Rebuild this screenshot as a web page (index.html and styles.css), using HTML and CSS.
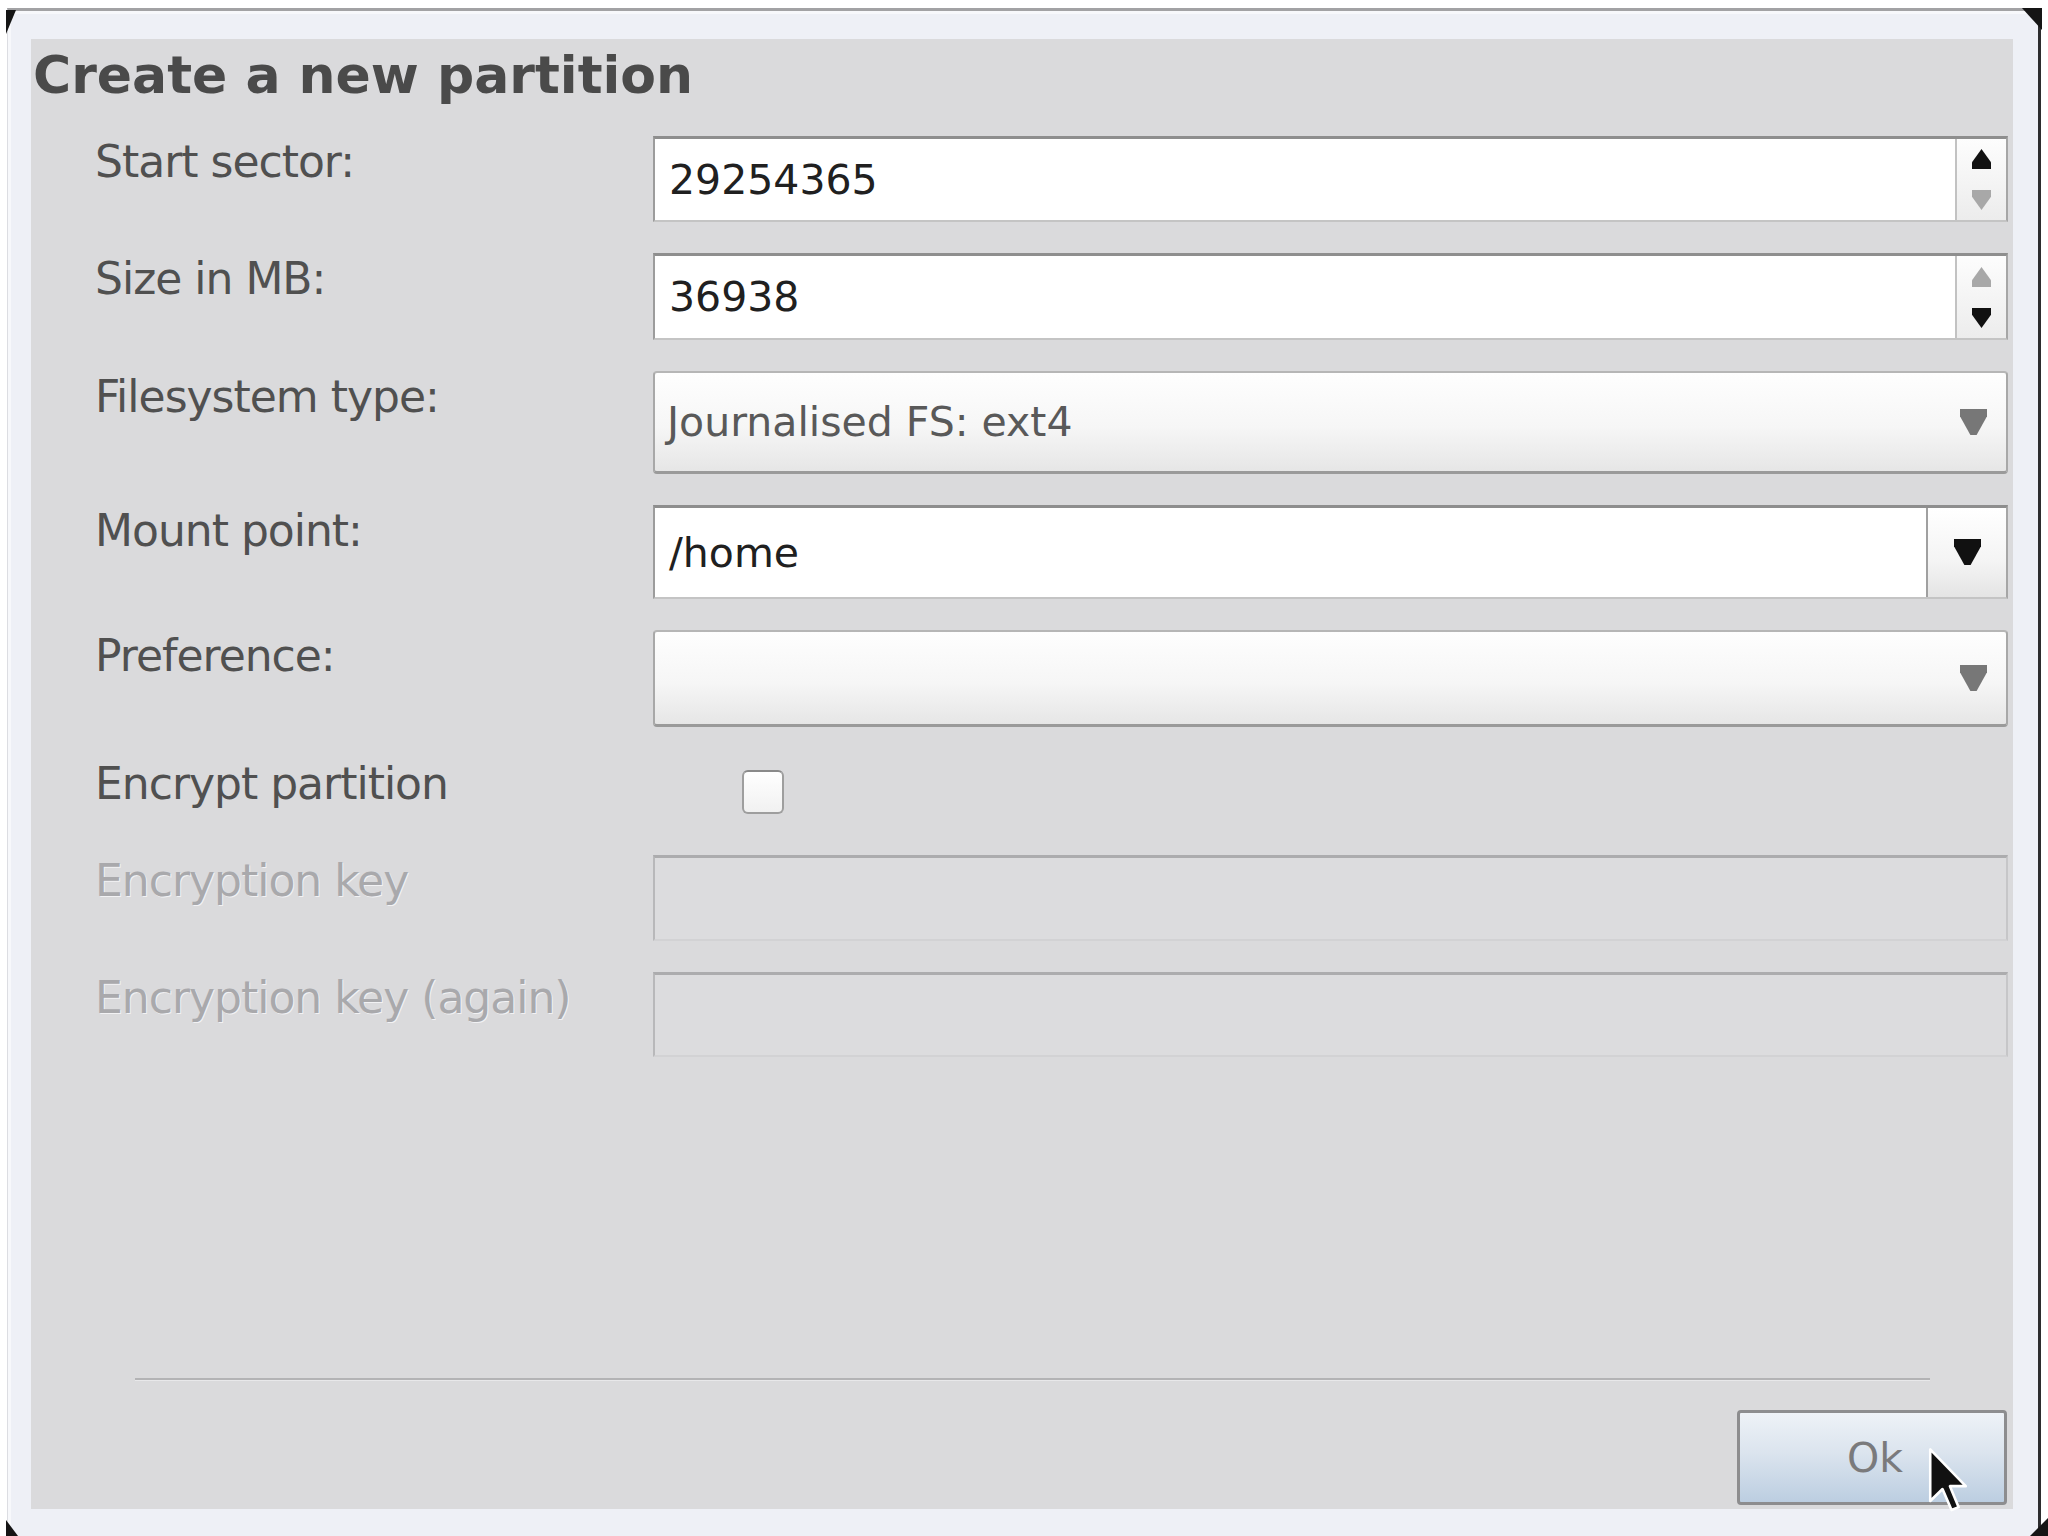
FILE: index.html
```html
<!DOCTYPE html>
<html>
<head>
<meta charset="utf-8">
<title>Create a new partition</title>
<link rel="stylesheet" href="styles.css">
</head>
<body>
<div class="screen">
  <div class="window">
    <div class="panel">
      <h1 class="title">Create a new partition</h1>
      <div class="form">
        <div class="label">Start sector:</div>
        <div class="entry spin h86">
          <span class="value">29254365</span>
          <div class="spin-btns">
            <span class="half"><svg class="arr-up" viewBox="0 0 20 21"><polygon points="10,0 20,14 20,21 0,21 0,14" fill="#111"/></svg></span>
            <span class="half"><svg class="arr-dn" viewBox="0 0 20 21"><polygon points="0,0 20,0 20,7 10,21 0,7" fill="#a8a8a8"/></svg></span>
          </div>
        </div>

        <div class="label">Size in MB:</div>
        <div class="entry spin h87">
          <span class="value">36938</span>
          <div class="spin-btns">
            <span class="half"><svg class="arr-up" viewBox="0 0 20 21"><polygon points="10,0 20,14 20,21 0,21 0,14" fill="#a8a8a8"/></svg></span>
            <span class="half"><svg class="arr-dn" viewBox="0 0 20 21"><polygon points="0,0 20,0 20,7 10,21 0,7" fill="#111"/></svg></span>
          </div>
        </div>

        <div class="label">Filesystem type:</div>
        <div class="combo h103">
          <span class="value muted">Journalised FS: ext4</span>
          <svg class="combo-arr" viewBox="0 0 26 26"><polygon points="0,0 26,0 26,7 16,25 10,25 0,7" fill="#777"/></svg>
        </div>

        <div class="label">Mount point:</div>
        <div class="entry combo-entry h94">
          <span class="value">/home</span>
          <div class="drop-btn">
            <svg class="combo-arr" viewBox="0 0 26 26"><polygon points="0,0 26,0 26,7 16,25 10,25 0,7" fill="#111"/></svg>
          </div>
        </div>

        <div class="label">Preference:</div>
        <div class="combo h97">
          <span class="value muted"></span>
          <svg class="combo-arr" viewBox="0 0 26 26"><polygon points="0,0 26,0 26,7 16,25 10,25 0,7" fill="#777"/></svg>
        </div>

        <div class="label">Encrypt partition</div>
        <div class="check-row">
          <span class="checkbox"></span>
        </div>

        <div class="label disabled">Encryption key</div>
        <div class="entry off h86"></div>

        <div class="label disabled">Encryption key (again)</div>
        <div class="entry off h85"></div>
      </div>

      <div class="footer">
        <div class="separator"></div>
        <div class="btn-row">
          <button class="ok">Ok</button>
        </div>
      </div>
    </div>
  </div>

  <span class="corner tl"></span>
  <span class="corner tr"></span>
  <span class="corner bl"></span>
  <span class="corner br"></span>

  <svg class="cursor" viewBox="0 0 13 21"><path d="M1,1 L1,17 L4.8,13.3 L7.6,19.8 L9.8,18.9 L7.1,12.4 L12,12.4 Z" fill="#111" stroke="#fff" stroke-width="0.8" stroke-linejoin="round"/></svg>
</div>
</body>
</html>
```

FILE: styles.css
```css
* { box-sizing: border-box; }

html, body {
  margin: 0;
  padding: 0;
  background: #ffffff;
}

.screen {
  position: relative;
  width: 2048px;
  height: 1536px;
  padding: 8px 0 0 7px;
  overflow: hidden;
  background: #ffffff;
  font-family: "DejaVu Sans", "Liberation Sans", sans-serif;
}

.window {
  width: 2034px;
  height: 1528px;
  background: #eef0f6;
  border-top: 3px solid #a2a2a4;
  border-right: 3px solid #2c2c2e;
  border-left: 1px solid #dcdde2;
  padding: 28px 25px 27px 23px;
  box-shadow: inset 3px 3px 0 #f7f8fb;
}

.panel {
  height: 1470px;
  background: #dadadc;
  display: flex;
  flex-direction: column;
}

.title {
  margin: 0;
  padding: 7px 0 0 2px;
  font-size: 52px;
  line-height: 58px;
  font-weight: bold;
  color: #4a4a4a;
}

.form {
  margin-top: 32px;
  padding: 0 5px 0 64px;
  display: grid;
  grid-template-columns: 558px 1fr;
  row-gap: 31px;
  align-items: start;
}

.label {
  font-size: 44px;
  letter-spacing: -1px;
  line-height: 52px;
  color: #505050;
  white-space: nowrap;
}

.label.disabled {
  color: #a9a9ac;
  text-shadow: 1px 1px 0 #f2f2f4;
}

.h85 { height: 85px; }
.h86 { height: 86px; }
.h87 { height: 87px; }
.h94 { height: 94px; }
.h97 { height: 97px; }
.h103 { height: 103px; }

.value {
  font-size: 41px;
  color: #202020;
  white-space: nowrap;
}

.value.muted { color: #595959; }

.entry {
  display: flex;
  align-items: center;
  background: #ffffff;
  border: 2px solid #a6a6a6;
  border-top: 3px solid #8e8e8e;
  border-left-color: #9c9c9c;
  border-bottom-color: #c4c4c4;
  padding-left: 14px;
}

.entry .value { flex: 1; }

.spin-btns {
  align-self: stretch;
  width: 51px;
  border-left: 2px solid #c2c2c2;
  background: linear-gradient(#fdfdfd, #ececec);
  display: flex;
  flex-direction: column;
}

.half {
  flex: 1;
  display: flex;
  align-items: center;
  justify-content: center;
}

.arr-up, .arr-dn {
  width: 19px;
  height: 20px;
}

.combo {
  display: flex;
  align-items: center;
  justify-content: space-between;
  border: 2px solid #a8a8a8;
  border-top-color: #b6b6b6;
  border-bottom: 3px solid #9a9a9a;
  border-radius: 4px;
  background: linear-gradient(#fefefe 0%, #f6f6f6 55%, #e6e6e6 100%);
  padding: 0 19px 0 12px;
}

.combo-arr {
  width: 27px;
  height: 27px;
  flex-shrink: 0;
}

.combo-entry {
  padding-right: 0;
}

.drop-btn {
  align-self: stretch;
  width: 80px;
  border-left: 2px solid #a0a0a0;
  background: linear-gradient(#ffffff 0%, #f4f4f4 60%, #e4e4e4 100%);
  display: flex;
  align-items: center;
  justify-content: center;
}

.check-row {
  height: 66px;
  padding: 12px 0 0 89px;
}

.checkbox {
  display: block;
  width: 42px;
  height: 44px;
  border: 2px solid #9e9e9e;
  border-top-color: #8a8a8a;
  border-radius: 6px;
  background: linear-gradient(#ffffff, #f1f1f1);
}

.entry.off {
  background: #dcdcde;
  border: 2px solid #c6c6c8;
  border-top: 3px solid #acacae;
  border-left-color: #b8b8ba;
  border-bottom-color: #d2d2d4;
}

.footer {
  margin-top: auto;
  padding-bottom: 4px;
}

.separator {
  margin: 0 83px 0 104px;
  height: 3px;
  background: #b3b3b5;
  border-bottom: 1px solid #e8e8ea;
}

.btn-row {
  margin-top: 29px;
  display: flex;
  justify-content: flex-end;
  padding-right: 6px;
}

.ok {
  width: 270px;
  height: 95px;
  border: 3px solid #8d8d8f;
  border-radius: 4px;
  background: linear-gradient(#eef2f7 0%, #dbe4ee 45%, #bccee1 100%);
  font-family: "DejaVu Sans", "Liberation Sans", sans-serif;
  font-size: 41px;
  color: #7a7a7c;
  padding: 0 0 0 6px;
}

.corner {
  position: absolute;
  width: 0;
  height: 0;
}

.corner.tl {
  left: 6px;
  top: 10px;
  border-left: 10px solid #151515;
  border-bottom: 24px solid transparent;
}

.corner.tr {
  left: 2022px;
  top: 8px;
  border-top: 22px solid #151515;
  border-left: 20px solid transparent;
}

.corner.bl {
  left: 6px;
  top: 1520px;
  border-left: 12px solid #151515;
  border-top: 16px solid transparent;
}

.corner.br {
  left: 2030px;
  top: 1518px;
  border-bottom: 18px solid #151515;
  border-left: 18px solid transparent;
}

.cursor {
  position: absolute;
  left: 1927px;
  top: 1446px;
  width: 42px;
  height: 68px;
}
```
